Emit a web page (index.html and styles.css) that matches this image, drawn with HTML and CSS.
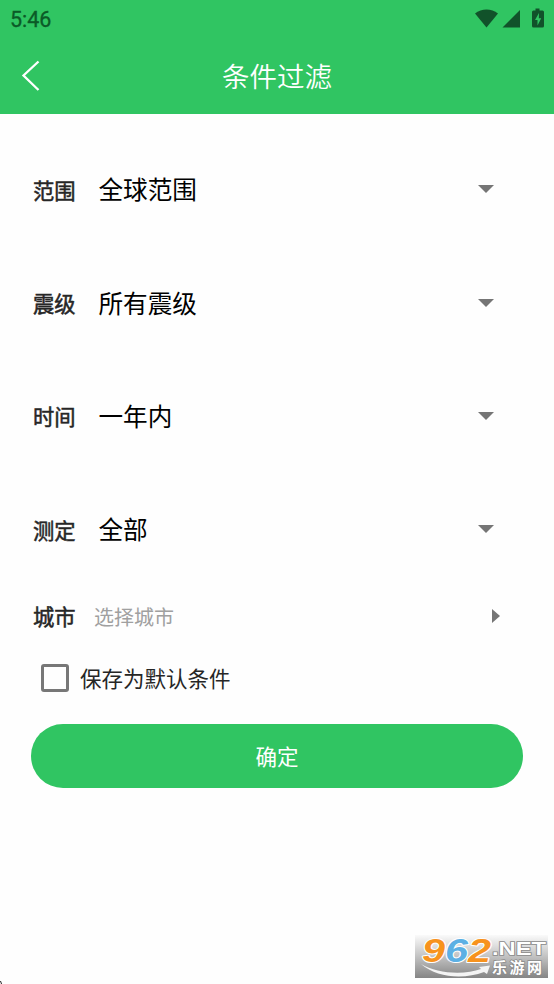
FILE: index.html
```html
<!DOCTYPE html>
<html lang="zh-CN">
<head>
  <meta charset="UTF-8">
  <meta name="viewport" content="width=device-width, initial-scale=1">
  <title>条件过滤</title>
  <link rel="stylesheet" href="styles.css">
</head>
<body>
  <header>
    <div class="status-bar">
      <span class="time">5:46</span>
      <svg class="status-icons" width="71" height="22" viewBox="0 0 71 22">
        <path d="M1 5.500C7.500 0 17.500 0 24 5.500L12.500 19.500Z"/>
        <path d="M46 2v17.500h-17.500z"/>
        <path fill-rule="evenodd" d="M61.500 0.500h4v2h3q1.500 0 1.500 1.500v14q0 1.500-1.500 1.500h-9q-1.500 0-1.500-1.500V4q0-1.500 1.500-1.500h2zM65 5L61 12h2.500v5.500L67.200 10.200h-2.400z"/>
      </svg>
    </div>
    <div class="title-bar">
      <button class="back" aria-label="返回">
        <svg width="20" height="32" viewBox="0 0 20 32">
          <path d="M18.500 1.500L3.500 15.500L18.500 30"/>
        </svg>
      </button>
      <h1>条件过滤</h1>
    </div>
  </header>

  <main>
    <div class="row">
      <span class="label">范围</span>
      <span class="value">全球范围</span>
      <span class="arrow-down"></span>
    </div>
    <div class="row">
      <span class="label">震级</span>
      <span class="value">所有震级</span>
      <span class="arrow-down"></span>
    </div>
    <div class="row">
      <span class="label">时间</span>
      <span class="value">一年内</span>
      <span class="arrow-down"></span>
    </div>
    <div class="row">
      <span class="label">测定</span>
      <span class="value">全部</span>
      <span class="arrow-down"></span>
    </div>
    <div class="row city">
      <span class="label">城市</span>
      <span class="placeholder">选择城市</span>
      <span class="arrow-right"></span>
    </div>
    <label class="save">
      <input type="checkbox">
      <span>保存为默认条件</span>
    </label>
    <button class="submit">确定</button>
  </main>

  <svg class="watermark" width="133" height="43" viewBox="0 0 133 43">
    <defs>
      <linearGradient id="shade" x1="0" y1="0" x2="0" y2="1">
        <stop offset="0" stop-color="#fafafa"/>
        <stop offset="0.5" stop-color="#c2c2c2"/>
        <stop offset="1" stop-color="#858585"/>
      </linearGradient>
    </defs>
    <rect width="133" height="43" fill="url(#shade)"/>
    <path class="swoosh" d="M6 29C22 39 50 40 66 34L64 32L75 30.500L72 39L69 37C49 44.500 22 43 6 29Z"/>
    <g class="digits">
      <text x="7" y="26.500" textLength="23" lengthAdjust="spacingAndGlyphs" fill="#f7931e">9</text>
      <text x="30" y="26.500" textLength="23" lengthAdjust="spacingAndGlyphs" fill="#5cb0e4">6</text>
      <text x="53" y="26.500" textLength="23" lengthAdjust="spacingAndGlyphs" fill="#f7931e">2</text>
    </g>
    <text class="net" x="77" y="20" textLength="54" lengthAdjust="spacingAndGlyphs">.NET</text>
    <text class="site" x="77" y="38" textLength="50" lengthAdjust="spacing">乐游网</text>
  </svg>
  <span class="corner"></span>
</body>
</html>
```
FILE: styles.css
```css
* {
  box-sizing: border-box;
}

body {
  margin: 0;
  height: 984px;
  position: relative;
  overflow: hidden;
  background: #fefefe;
  color: #262626;
  font-family: "Noto Sans CJK SC", "Noto Sans", sans-serif;
}

button {
  border: none;
  padding: 0;
  font-family: inherit;
}

header {
  height: 114px;
  background: #30c562;
}

.status-bar {
  height: 38px;
  padding: 0 9px 0 10px;
  display: flex;
  align-items: center;
  justify-content: space-between;
}

.time {
  font: 400 21.5px/38px Roboto, sans-serif;
  padding-top: 1px;
  color: #0b5a27;
  -webkit-text-stroke: 0.3px #0b5a27;
}

.status-icons {
  fill: #11522a;
}

.title-bar {
  height: 76px;
  padding: 0 20px;
  display: grid;
  grid-template-columns: 40px 1fr 40px;
  align-items: center;
}

.back {
  height: 32px;
  background: none;
  text-align: left;
}

.back svg {
  display: block;
  fill: none;
  stroke: #fff;
  stroke-width: 2.3;
}

h1 {
  margin: 0;
  padding-bottom: 1px;
  font-size: 27.5px;
  line-height: 75px;
  font-weight: 350;
  text-align: center;
  color: #fff;
}

main {
  padding: 18.7px 31px 0;
}

.row {
  height: 113.3px;
  padding: 0 29px 0 2px;
  display: flex;
  align-items: center;
}

.label {
  width: 65px;
  font-size: 21.3px;
  -webkit-text-stroke: 0.5px #262626;
}

.value {
  flex: 1;
  padding: 0 0 2px 0.5px;
  font-size: 24.6px;
  color: #000;
}

.arrow-down {
  border: 8px solid transparent;
  border-top-color: #757575;
  border-bottom: none;
}

.city {
  height: 60px;
  padding-right: 23px;
}

.city .label {
  width: 61px;
}

.placeholder {
  flex: 1;
  padding-top: 1px;
  font-size: 20px;
  color: #a0a0a0;
}

.arrow-right {
  border: 7px solid transparent;
  border-left: 8px solid #757575;
  border-right: none;
}

.save {
  height: 64px;
  padding-left: 10px;
  display: flex;
  align-items: center;
  gap: 11px;
  font-size: 21.5px;
}

.save input {
  appearance: none;
  width: 28px;
  height: 28px;
  margin: 0;
  border: 3px solid #777;
  border-radius: 3px;
}

.submit {
  display: block;
  width: 100%;
  height: 64px;
  margin-top: 13.8px;
  border-radius: 32px;
  background: #30c562;
  color: #fff;
  font-size: 21.5px;
}

/* site badge laid over the bottom right corner */
.watermark {
  position: absolute;
  right: 6px;
  bottom: 6px;
  overflow: visible;
}

.swoosh {
  fill: #f4f4f4;
}

.digits {
  font: italic 700 33px "Liberation Sans", sans-serif;
  stroke: #fff;
  stroke-width: 2;
  stroke-linejoin: round;
  paint-order: stroke;
}

.net,
.site {
  fill: #fff;
  stroke: #8a8a8a;
  stroke-width: 1.5;
  paint-order: stroke;
}

.net {
  font: 700 18px "Liberation Sans", sans-serif;
}

.site {
  font: 700 15px "Liberation Sans", "Noto Sans CJK SC", sans-serif;
}

.corner {
  position: absolute;
  left: 0;
  bottom: 0;
  width: 2px;
  height: 3px;
  background: #222;
  clip-path: polygon(0 0, 50% 0, 100% 100%, 50% 100%);
}
```
